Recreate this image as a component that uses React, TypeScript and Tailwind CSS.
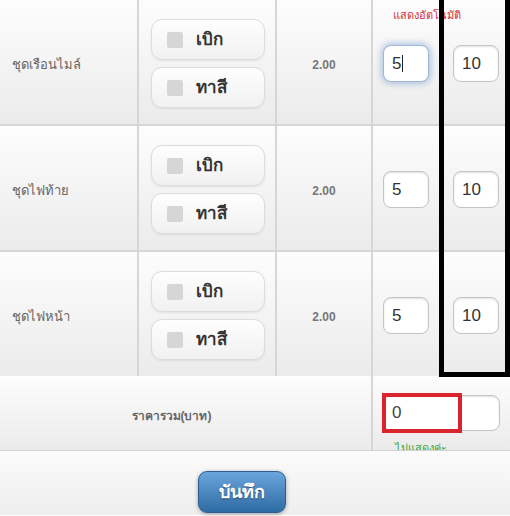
import React from "react";

const items = [
  { name: "ชุดเรือนไมล์", price: "2.00", qty: "5", total: "10", focused: true },
  { name: "ชุดไฟท้าย", price: "2.00", qty: "5", total: "10", focused: false },
  { name: "ชุดไฟหน้า", price: "2.00", qty: "5", total: "10", focused: false },
];

const cell = "bg-linear-to-b from-[#fdfdfd] to-[#ebebeb] flex items-center";
const font = { fontFamily: "'Liberation Sans', 'Noto Sans', sans-serif" };

function CheckButton({ label }: { label: string }) {
  return (
    <div className="flex h-[41px] w-[114px] items-center rounded-[11px] border border-[#dcdcdc] bg-linear-to-b from-[#fefefe] to-[#f1f1f1] shadow-[0_1px_2px_rgba(0,0,0,0.08)]">
      <span className="ml-[15px] h-[16px] w-[16px] rounded-[2px] bg-[#d6d6d6]" />
      <span className="ml-[13px] text-[17px] font-bold text-[#333]">{label}</span>
    </div>
  );
}

function NumBox({ value, focused, caret }: { value: string; focused?: boolean; caret?: boolean }) {
  return (
    <div
      className={`flex h-[37px] w-[46px] items-center rounded-[8px] border bg-white pl-[8px] text-[17px] text-[#333] ${
        focused
          ? "border-[#9fb7d3] shadow-[0_0_6px_2px_rgba(90,140,200,0.45)]"
          : "border-[#c4c4c4] shadow-[inset_0_1px_2px_rgba(0,0,0,0.12)]"
      }`}
    >
      {value}
      {caret && <span className="ml-[1px] h-[17px] w-px bg-[#222]" />}
    </div>
  );
}

export default function App() {
  return (
    <div className="relative h-[516px] w-[510px] overflow-hidden bg-white" style={font}>
      <div className="grid grid-cols-[137px_136px_94px_66px_69px] gap-[2px] bg-[#d6d6d6]">
        {items.map((it, i) => (
          <React.Fragment key={it.name}>
            <div className={`${cell} h-[124px] pl-[12px] pt-[6px] text-[13px] text-[#666]`}>{it.name}</div>
            <div className={`${cell} h-[124px] flex-col justify-center gap-[7px] pl-[12px] pt-[3px] !items-start`}>
              <CheckButton label="เบิก" />
              <CheckButton label="ทาสี" />
            </div>
            <div className={`${cell} h-[124px] justify-center pt-[6px] text-[12px] font-bold text-[#777]`}>{it.price}</div>
            <div className={`${cell} relative h-[124px] pl-[10px] pt-[3px]`}>
              {i === 0 && (
                <span className="absolute left-[20px] top-[7px] whitespace-nowrap text-[11px] text-[#d2323a]">
                  แสดงอัตโนมัติ
                </span>
              )}
              <NumBox value={it.qty} focused={it.focused} caret={it.focused} />
            </div>
            <div className={`${cell} h-[124px] pl-[12px] pt-[3px]`}>
              <NumBox value={it.total} />
            </div>
          </React.Fragment>
        ))}
      </div>

      <div className="grid grid-cols-[371px_137px] gap-[2px] border-b border-[#d2d2d2] bg-[#d6d6d6]">
        <div className={`${cell} h-[74px] justify-center pr-[28px] pt-[6px] text-[12px] font-bold text-[#666]`}>
          ราคารวม(บาท)
        </div>
        <div className={`${cell} relative h-[74px] flex-col !items-start overflow-hidden pl-[10px] pt-[19px]`}>
          <div className="flex h-[36px] w-[117px] shrink-0 items-center rounded-[8px] border border-[#c4c4c4] bg-white pl-[8px] text-[17px] text-[#444] shadow-[inset_0_1px_2px_rgba(0,0,0,0.12)]">
            0
          </div>
          <span className="mt-[10px] shrink-0 pl-[12px] text-[11px] leading-[14px] text-[#3aa23a]">ไม่แสดงค่ะ</span>
          <div className="absolute left-[9px] top-[17px] h-[40px] w-[80px] border-[4px] border-[#d9232d]" />
        </div>
      </div>

      <div className="h-[64px] bg-linear-to-b from-[#fbfbfb] to-[#eeeeee] pl-[198px] pt-[20px]">
        <button className="h-[42px] w-[88px] rounded-[9px] border border-[#2c5f8f] bg-linear-to-b from-[#6aa6db] to-[#2e6ca5] text-[18px] font-bold text-white shadow-[0_1px_4px_rgba(0,0,0,0.35)] [text-shadow:0_1px_1px_rgba(0,0,0,0.5)]">
          บันทึก
        </button>
      </div>

      <div className="pointer-events-none absolute left-[439px] top-[-6px] h-[383px] w-[71px] border-[5px] border-black" />
    </div>
  );
}
